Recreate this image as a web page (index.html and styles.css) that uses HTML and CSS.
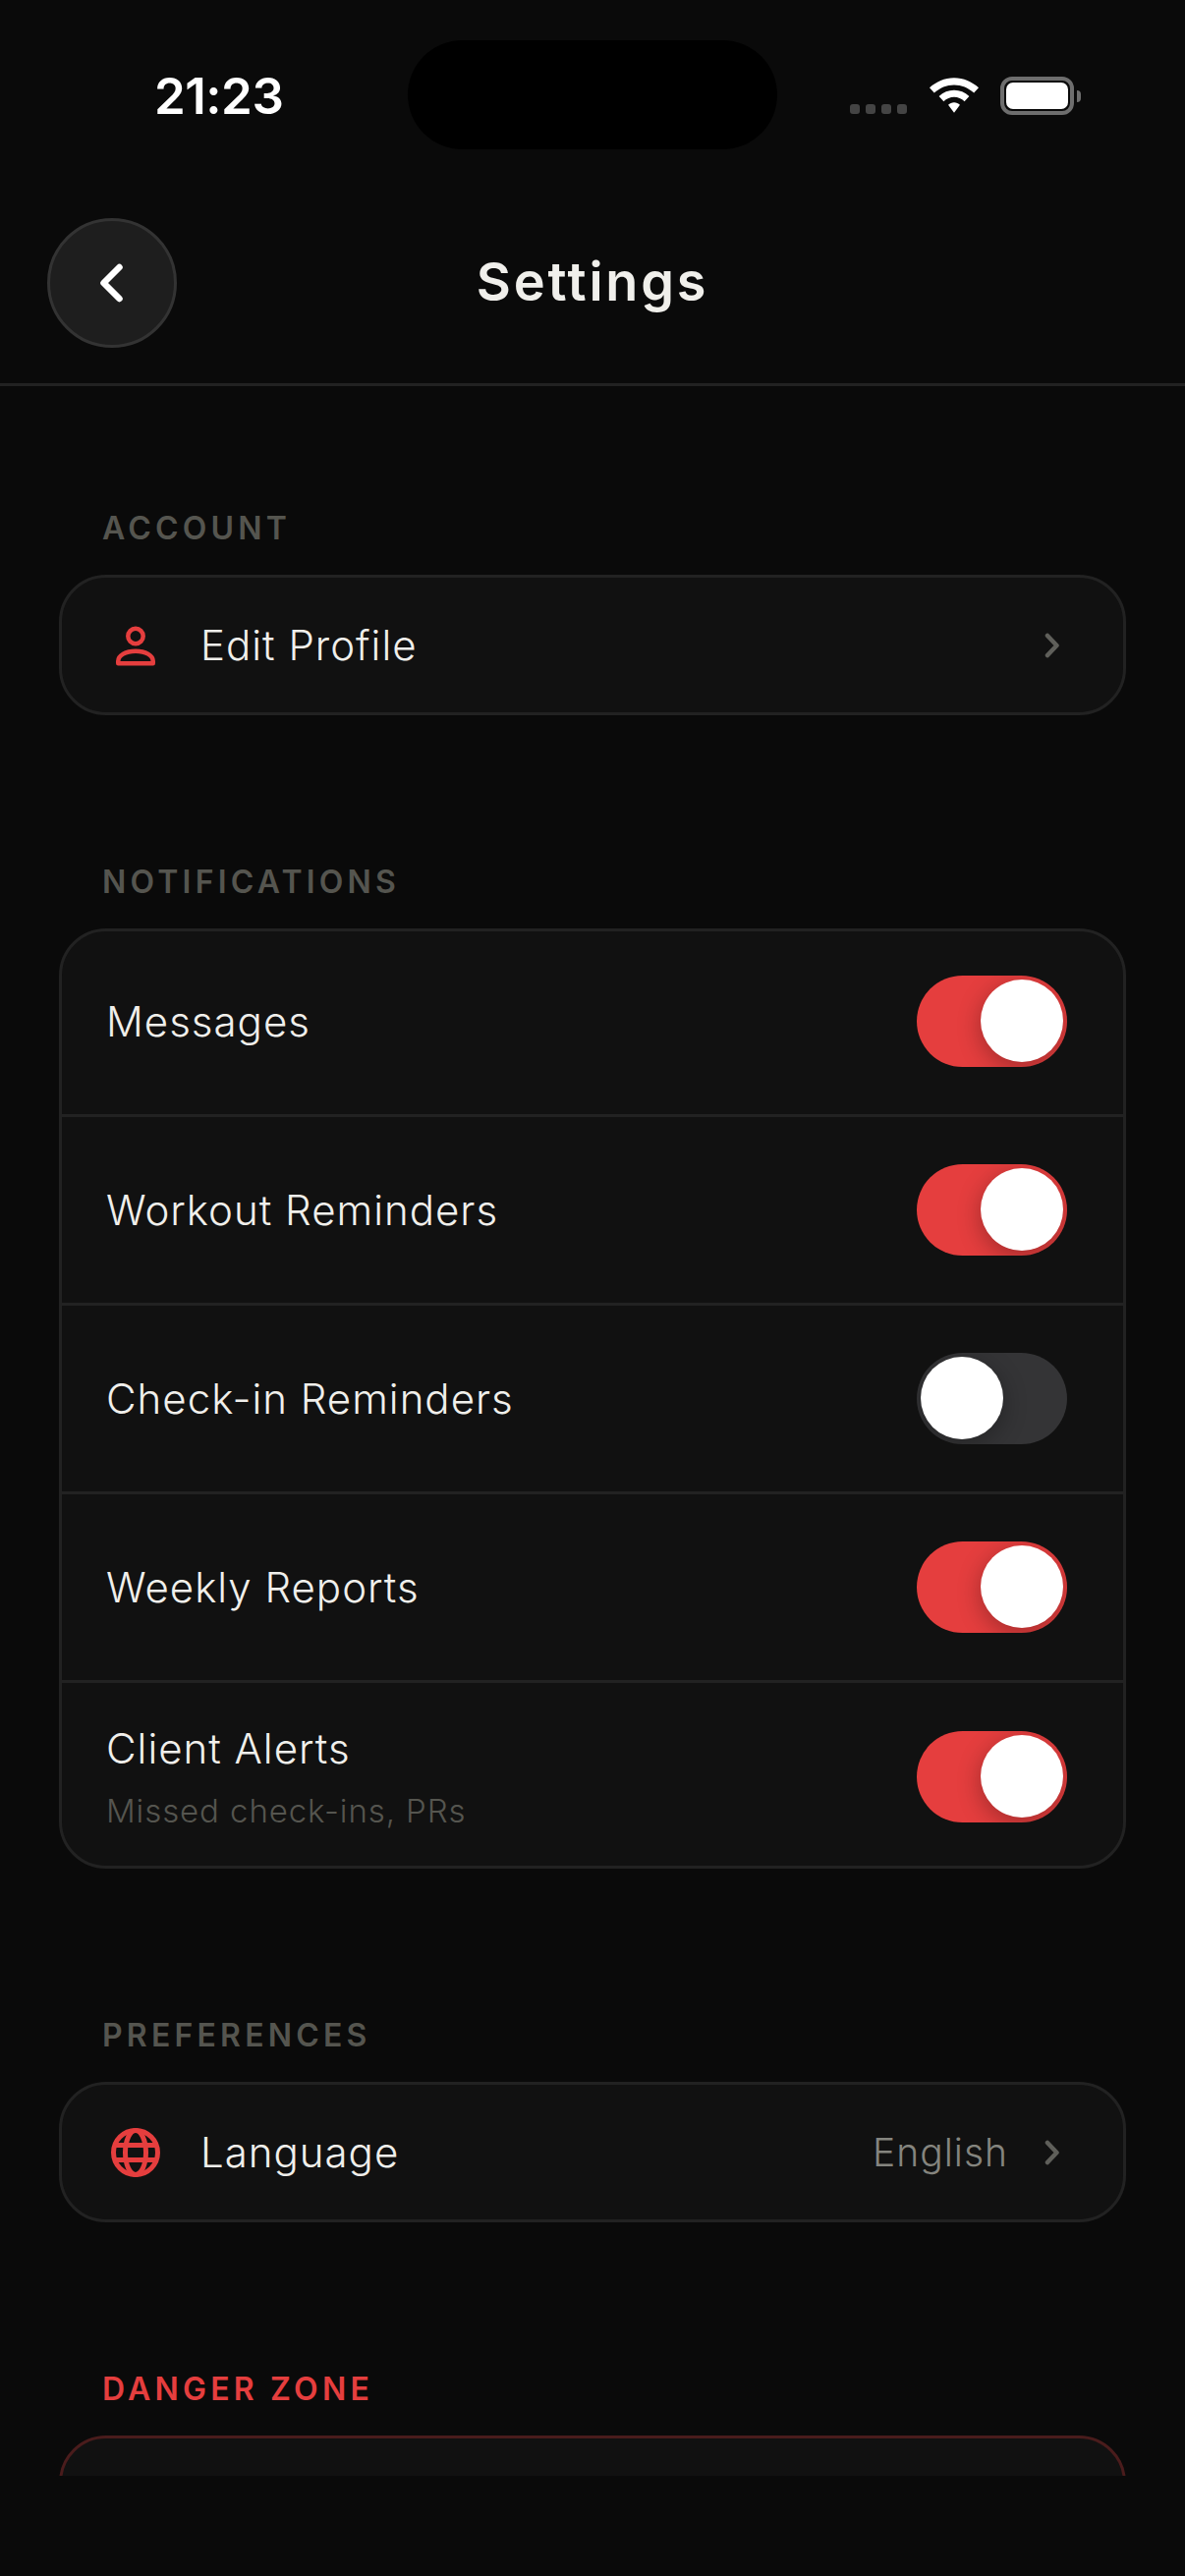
FILE: index.html
```html
<!DOCTYPE html>
<html lang="en">
<head>
    <meta charset="UTF-8">
    <meta name="viewport" content="width=device-width, initial-scale=1.0">
    <title>Settings</title>
    <link rel="stylesheet" href="styles.css">
</head>
<body>
<div class="screen">
    <div class="status-bar">
        <span class="time">21:23</span>
        <div class="island"></div>
        <div class="status-icons">
            <div class="signal"><i></i><i></i><i></i><i></i></div>
            <svg class="wifi" width="50" height="37" viewBox="0 0 52 38">
                <path d="M26 0C16 0 7 4 0 10.5L5 16C11 10.5 18 7.5 26 7.5C34 7.5 41 10.5 47 16L52 10.5C45 4 36 0 26 0Z" fill="#fff"/>
                <path d="M26 13C20 13 14.5 15.3 10 19.5L15 25C18 22 22 20.4 26 20.4C30 20.4 34 22 37 25L42 19.5C37.5 15.3 32 13 26 13Z" fill="#fff"/>
                <path d="M26 26C23.5 26 21.5 27 19.8 28.5L26 37L32.2 28.5C30.5 27 28.5 26 26 26Z" fill="#fff"/>
            </svg>
            <div class="battery">
                <div class="battery-body"><div class="battery-fill"></div></div>
                <div class="battery-tip"></div>
            </div>
        </div>
    </div>

    <div class="header">
        <button class="back-button">
            <svg width="36" height="42" viewBox="0 0 36 42" fill="none">
                <path d="M25.5 5L9.5 21L25.5 37" stroke="#fff" stroke-width="6.5" stroke-linecap="round" stroke-linejoin="round"/>
            </svg>
        </button>
        <h1 class="title">Settings</h1>
        <div class="header-spacer"></div>
    </div>

    <div class="content">
        <section class="section">
            <div class="section-label">ACCOUNT</div>
            <div class="card">
                <div class="row row-link">
                    <svg class="row-icon" width="60" height="60" viewBox="0 0 60 60" fill="none" stroke="#e53e3e" stroke-width="4.5">
                        <circle cx="30" cy="20.5" r="7.7"/>
                        <path d="M12.25 48.25H47.75V46C47.75 40 40 35.75 30 35.75C20 35.75 12.25 40 12.25 46Z" stroke-linejoin="round"/>
                    </svg>
                    <span class="row-text">Edit Profile</span>
                    <svg class="chevron" width="16" height="26" viewBox="0 0 16 26" fill="none">
                        <path d="M3 3L12.5 13L3 23" stroke="#5f5f5a" stroke-width="4.5" stroke-linecap="round" stroke-linejoin="round"/>
                    </svg>
                </div>
            </div>
        </section>

        <section class="section">
            <div class="section-label">NOTIFICATIONS</div>
            <div class="card">
                <div class="row row-toggle">
                    <span class="row-text">Messages</span>
                    <div class="toggle on"><div class="knob"></div></div>
                </div>
                <div class="row row-toggle">
                    <span class="row-text">Workout Reminders</span>
                    <div class="toggle on"><div class="knob"></div></div>
                </div>
                <div class="row row-toggle">
                    <span class="row-text">Check-in Reminders</span>
                    <div class="toggle"><div class="knob"></div></div>
                </div>
                <div class="row row-toggle">
                    <span class="row-text">Weekly Reports</span>
                    <div class="toggle on"><div class="knob"></div></div>
                </div>
                <div class="row row-toggle">
                    <div class="row-stack">
                        <span class="row-text">Client Alerts</span>
                        <span class="row-sub">Missed check-ins, PRs</span>
                    </div>
                    <div class="toggle on"><div class="knob"></div></div>
                </div>
            </div>
        </section>

        <section class="section">
            <div class="section-label">PREFERENCES</div>
            <div class="card">
                <div class="row row-link">
                    <svg class="row-icon" width="60" height="60" viewBox="0 0 60 60" fill="none" stroke="#e53e3e" stroke-width="5">
                        <circle cx="30" cy="30" r="22.5"/>
                        <ellipse cx="30" cy="30" rx="10.5" ry="22.5"/>
                        <path d="M9 22.5H51M9 37.5H51"/>
                    </svg>
                    <span class="row-text">Language</span>
                    <span class="row-value">English</span>
                    <svg class="chevron" width="16" height="26" viewBox="0 0 16 26" fill="none">
                        <path d="M3 3L12.5 13L3 23" stroke="#5f5f5a" stroke-width="4.5" stroke-linecap="round" stroke-linejoin="round"/>
                    </svg>
                </div>
            </div>
        </section>

        <section class="section">
            <div class="section-label danger">DANGER ZONE</div>
            <div class="card card-danger"></div>
        </section>
    </div>
</div>
</body>
</html>
```

FILE: styles.css
```css
* {
    box-sizing: border-box;
}

html, body {
    margin: 0;
    padding: 0;
    background-color: #0a0a0a;
}

body {
    font-family: Inter, "Liberation Sans", sans-serif;
    color: #f0efeb;
}

.screen {
    width: 1206px;
    height: 2622px;
    overflow: hidden;
    background-color: #0a0a0a;
}

.status-bar {
    height: 177px;
    padding-top: 41px;
    padding-left: 157px;
    display: flex;
    align-items: flex-start;
}

.time {
    width: 258px;
    margin-top: 27px;
    font-size: 51px;
    line-height: 60px;
    font-weight: 600;
    letter-spacing: -0.5px;
    color: #fff;
}

.island {
    width: 376px;
    height: 111px;
    border-radius: 56px;
    background-color: #000;
}

.status-icons {
    display: flex;
    align-items: flex-end;
    margin-left: 74px;
    margin-top: 37px;
}

.signal {
    display: flex;
    gap: 6px;
    margin-bottom: 1px;
}

.signal i {
    display: block;
    width: 10px;
    height: 10px;
    border-radius: 3px;
    background-color: #444;
}

.wifi {
    margin-left: 23px;
    margin-bottom: 1px;
}

.battery {
    display: flex;
    align-items: center;
    margin-left: 22px;
}

.battery-body {
    width: 75px;
    height: 39px;
    border: 4px solid #6e6e6e;
    border-radius: 12px;
    padding: 2px;
}

.battery-fill {
    width: 100%;
    height: 100%;
    border-radius: 7px;
    background-color: #fff;
}

.battery-tip {
    width: 4px;
    height: 12px;
    margin-left: 3px;
    border-radius: 0 4px 4px 0;
    background-color: #6e6e6e;
}

.header {
    height: 216px;
    border-bottom: 3px solid #222;
    padding: 45px 48px 0;
    display: flex;
    align-items: flex-start;
}

.back-button {
    width: 132px;
    height: 132px;
    flex: none;
    padding: 0;
    border: 3px solid #333;
    border-radius: 50%;
    background-color: #1e1e1e;
    display: flex;
    align-items: center;
    justify-content: center;
}

.header-spacer {
    width: 132px;
    flex: none;
}

.title {
    margin: 0;
    flex: 1;
    padding-top: 32px;
    font-size: 54px;
    line-height: 66px;
    font-weight: 600;
    letter-spacing: 2.8px;
    text-align: center;
    color: #f0efeb;
}

.content {
    height: 2127px;
    overflow: hidden;
    padding: 125px 60px 0;
}

.section {
    margin-bottom: 150px;
}

.section-label {
    padding-left: 44px;
    margin-bottom: 27px;
    font-size: 32px;
    line-height: 40px;
    font-weight: 600;
    letter-spacing: 4.2px;
    color: #55554f;
}

.section-label.danger {
    color: #e53e3e;
}

.card {
    border: 3px solid #222;
    border-radius: 48px;
    background-color: #111;
    overflow: hidden;
}

.card-danger {
    height: 400px;
    border-color: #4a1c1c;
}

.row {
    display: flex;
    align-items: center;
}

.row-link {
    height: 137px;
    padding-left: 45px;
    padding-right: 64px;
}

.row-toggle {
    height: 192px;
    padding-left: 45px;
    padding-right: 57px;
    justify-content: space-between;
    border-bottom: 3px solid #222;
}

.row-toggle:first-child {
    height: 189px;
    padding-bottom: 3px;
}

.row-toggle:last-child {
    height: 186px;
    padding-top: 4px;
    border-bottom: none;
}

.row-icon {
    flex: none;
}

.row-text {
    font-size: 42px;
    line-height: 52px;
    font-weight: 350;
    letter-spacing: 1px;
    color: #f0efeb;
}

.row-link .row-text {
    flex: 1;
    margin-left: 36px;
}

.row-stack {
    display: flex;
    flex-direction: column;
}

.row-sub {
    margin-top: 17px;
    font-size: 33px;
    line-height: 40px;
    font-weight: 300;
    letter-spacing: 0.9px;
    color: #55554f;
}

.row-value {
    margin-right: 37px;
    font-size: 39px;
    line-height: 52px;
    font-weight: 300;
    letter-spacing: 1px;
    color: #85857f;
}

.toggle {
    width: 153px;
    height: 93px;
    flex: none;
    padding: 4px;
    border-radius: 47px;
    background-color: #343436;
    display: flex;
    overflow: hidden;
}

.toggle.on {
    justify-content: flex-end;
    background-color: #e53e3e;
}

.knob {
    width: 84px;
    height: 84px;
    border-radius: 50%;
    background-color: #fff;
    box-shadow: 0 6px 24px rgba(0, 0, 0, 0.3);
}
```
